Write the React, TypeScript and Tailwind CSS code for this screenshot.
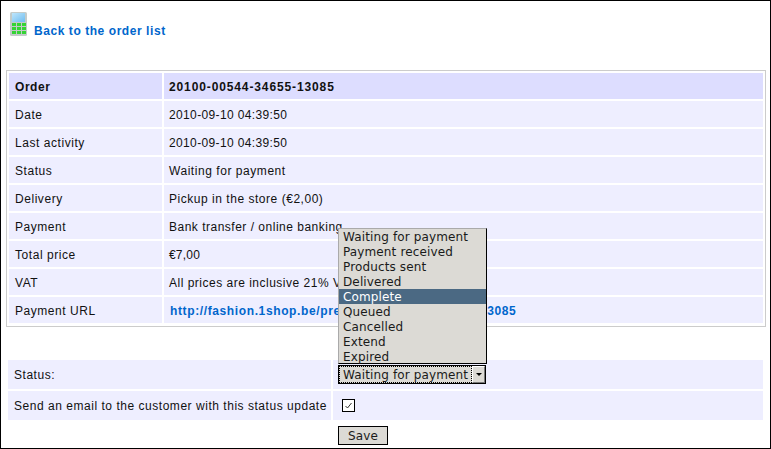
import React from 'react'

const rows = [
  ['Date', '2010-09-10 04:39:50', 'tracking-[0.36px]'],
  ['Last activity', '2010-09-10 04:39:50', 'tracking-[0.36px]'],
  ['Status', 'Waiting for payment', 'tracking-[0.55px]'],
  ['Delivery', 'Pickup in the store (€2,00)', 'tracking-[0.53px]'],
  ['Payment', 'Bank transfer / online banking', 'tracking-[0.5px]'],
  ['Total price', '€7,00', 'tracking-[0.2px]'],
  ['VAT', 'All prices are inclusive 21% VAT', 'tracking-[0.5px]'],
]

const options = [
  'Waiting for payment',
  'Payment received',
  'Products sent',
  'Delivered',
  'Complete',
  'Queued',
  'Cancelled',
  'Extend',
  'Expired',
]

function CalcIcon() {
  return (
    <svg width="17" height="24" viewBox="0 0 17 24" className="block">
      <defs>
        <linearGradient id="screen" x1="0" y1="0" x2="1" y2="1">
          <stop offset="0" stopColor="#bfe6fb" />
          <stop offset="1" stopColor="#6fbdf0" />
        </linearGradient>
      </defs>
      <rect x="0" y="0" width="17" height="24" rx="1.5" fill="#c3cbc9" />
      <rect x="2" y="1" width="13" height="9" fill="url(#screen)" />
      {[11, 15, 19].map((y) =>
        [2, 7, 12].map((x) => <rect key={`${x}-${y}`} x={x} y={y} width="4" height="3" fill="#35d435" />)
      )}
    </svg>
  )
}

function InfoRow({ label, children, head, valueClass = '' }: { label: string; children: React.ReactNode; head?: boolean; valueClass?: string }) {
  const bg = head ? 'bg-[#ddddff] font-bold' : 'bg-[#eeeeff]'
  return (
    <div className="flex gap-[2px]">
      <div className={`w-[153px] h-[26px] pl-[6px] pt-px flex items-center tracking-[0.55px] ${bg}`}>{label}</div>
      <div className={`flex-1 h-[26px] pl-[5px] pt-px flex items-center ${bg} ${valueClass}`}>{children}</div>
    </div>
  )
}

export default function App() {
  return (
    <div className="relative w-[771px] h-[449px] bg-white border border-black overflow-hidden font-['Liberation_Sans',Arial,sans-serif] text-[12px] text-[#111]">
      <div className="flex items-start h-[69px] pl-[9px] pt-[11px]">
        <CalcIcon />
        <a className="ml-[7px] mt-[12px] font-bold text-[#0066cc] leading-[14px] tracking-[0.56px]">Back to the order list</a>
      </div>

      <div className="ml-[5px] mr-[5px] w-[760px] h-[257px] border border-[#cccccc] p-[2px] flex flex-col gap-[2px]">
        <InfoRow label="Order" head valueClass="tracking-[0.88px]">20100-00544-34655-13085</InfoRow>
        {rows.map(([label, value, track]) => (
          <InfoRow key={label} label={label} valueClass={track}>{value}</InfoRow>
        ))}
        <InfoRow label="Payment URL" valueClass="tracking-[0.62px]">
          <a className="ml-px font-bold text-[#0066cc]">http://fashion.1shop.be/pre/1-20100-00544-34655-13085</a>
        </InfoRow>
      </div>

      <div className="mt-[33px] ml-[7px] w-[755px] flex flex-col gap-[2px]">
        <div className="flex gap-[2px]">
          <div className="w-[323px] h-[29px] pl-[6px] pt-px flex items-center bg-[#eeeeff] tracking-[0.53px]">Status:</div>
          <div className="flex-1 h-[29px] pl-[5px] pt-[5px] bg-[#eeeeff]">
            <div className="w-[148px] h-[19px] border border-black bg-[#dcdad5] flex items-center font-['DejaVu_Sans',sans-serif] text-[12px] tracking-[0.13px] leading-none">
              <span className="flex-1 h-[17px] border border-dotted border-black flex items-center pl-[3px] text-[#1a1a1a] whitespace-nowrap overflow-hidden">Waiting for payment</span>
              <span className="w-[13px] h-[17px] border border-t-white border-l-white border-r-[#777] border-b-[#777] bg-[#dcdad5] flex items-center justify-center">
                <span className="w-0 h-0 border-x-[3px] border-x-transparent border-t-[3px] border-t-black" />
              </span>
            </div>
          </div>
        </div>
        <div className="flex gap-[2px]">
          <div className="w-[323px] h-[29px] pl-[6px] pt-px flex items-center bg-[#eeeeff] tracking-[0.53px] whitespace-nowrap">Send an email to the customer with this status update</div>
          <div className="flex-1 h-[29px] pl-[9px] flex items-center bg-[#eeeeff]">
            <span className="w-[13px] h-[13px] border border-black bg-white flex items-center justify-center">
              <svg width="9" height="9" viewBox="0 0 9 9">
                <path d="M1.5 5 L3.5 7 L7.5 2" fill="none" stroke="#333" strokeWidth="1" />
              </svg>
            </span>
          </div>
        </div>
      </div>

      <div className="mt-[6px] ml-[337px]">
        <button className="w-[50px] h-[19px] border border-black bg-[#dcdad5] font-['DejaVu_Sans',sans-serif] text-[12px] tracking-[0.13px] text-[#1a1a1a] flex items-center justify-center">
          Save
        </button>
      </div>

      <div className="absolute left-[337px] top-[227px] w-[149px] h-[136px] bg-[#dcdad5] border border-t-[#aaa] border-l-[#aaa] border-r-black border-b-black font-['DejaVu_Sans',sans-serif] text-[12px] tracking-[0.13px] text-[#1a1a1a]">
        {options.map((o) => (
          <div key={o} className={`h-[15px] pl-[4px] flex items-center ${o === 'Complete' ? 'bg-[#4b6983] text-white' : ''}`}>
            {o}
          </div>
        ))}
      </div>
    </div>
  )
}
